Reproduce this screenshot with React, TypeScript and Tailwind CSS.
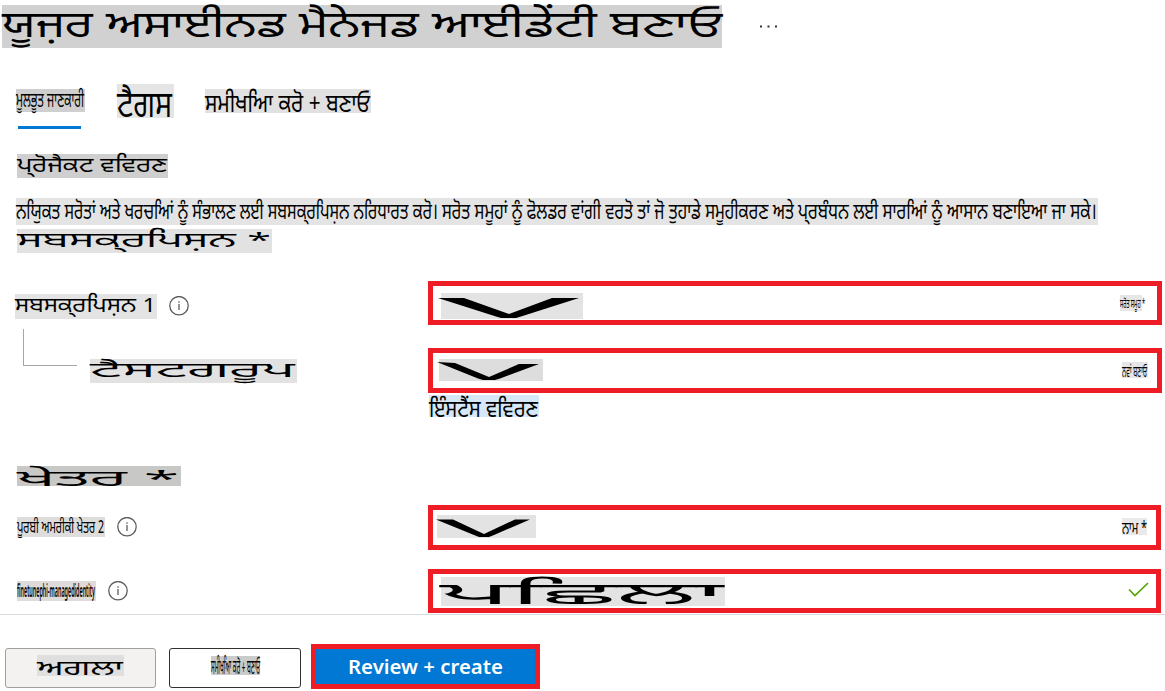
import { useLayoutEffect, useRef, useState } from 'react';
import type { ReactNode } from 'react';

type FitProps = {
  children: string;
  /** Size, background and font size of the box. */
  className: string;
  /** Drawn width of the text. */
  fit: number;
  /** Distance from the top of the box to the baseline. */
  base: number;
  x?: number;
};

/** A shaded box whose single line of text is stretched to a given width. */
function Fit({ children, className, fit, base, x = 0 }: FitProps) {
  const ref = useRef<HTMLSpanElement>(null);
  const [scale, setScale] = useState(1);
  useLayoutEffect(() => {
    if (ref.current) setScale(fit / ref.current.getBoundingClientRect().width * scale);
  }, [fit, children]);
  return (
    <div className={`shrink-0 ${className}`}>
      <span
        ref={ref}
        className="block h-0 w-max origin-left whitespace-pre leading-[0]"
        style={{ transform: `translate(${x}px, calc(${base}px - 0.388em)) scaleX(${scale})` }}
      >
        {children}
      </span>
    </div>
  );
}

function Info({ className }: { className: string }) {
  return (
    <svg className={`size-5 shrink-0 ${className}`} viewBox="0 0 20 20" fill="none">
      <circle cx="10" cy="9.700" r="9.200" stroke="#605e5c" strokeWidth="1.300" />
      <path d="M10 8V14M10 5.200V6.700" stroke="#605e5c" strokeWidth="1.300" />
    </svg>
  );
}

function Field({ className, children }: { className: string; children: ReactNode }) {
  return (
    <div className={`flex shrink-0 items-start border-[5px] border-[#ee1c24] bg-white ${className}`}>
      {children}
    </div>
  );
}

function Chevron({ className, box, points }: { className: string; box: string; points: string }) {
  return (
    <svg className={`shrink-0 overflow-visible ${className}`} viewBox={box}>
      <polygon points={points} fill="#000" />
    </svg>
  );
}

export default function App() {
  return (
    <main className="flex h-[691px] w-[1165px] flex-col overflow-hidden bg-white font-['Noto_Sans','Noto_Sans_Gurmukhi',sans-serif] text-black [font-feature-settings:'nukt'_0]">
      <header className="flex h-[84px] items-start pl-[2px] pt-[5px]">
        <h1 className="flex h-[43px] w-[720px] shrink-0 gap-[14px] bg-[#d1d1d1] text-[37px]">
          <Fit className="w-[90px]" fit={91} base={32.500}>ਯੂਜ਼ਰ</Fit>
          <Fit className="w-[179px]" fit={180} base={32.500}>ਅਸਾਈਨਡ</Fit>
          <Fit className="w-[119px]" fit={120} base={32.500}>ਮੈਨੇਜਡ</Fit>
          <Fit className="w-[164px]" fit={165} base={32.500}>ਆਈਡੇਂਟੀ</Fit>
          <Fit className="w-[112px]" fit={112} base={32.500}>ਬਣਾਓ</Fit>
        </h1>
        <svg className="ml-[37px] mt-[20px] h-[3px] w-[20px]" viewBox="0 0 20 3" fill="#333">
          <path d="M1 .5h2v2H1zM8.500 .5h2v2h-2zM16 .5h2v2h-2z" />
        </svg>
      </header>

      <nav className="flex h-[70px] items-start pl-[16px]">
        <div className="mt-[5px] flex w-[69px] flex-col">
          <Fit className="h-[23px] w-[69px] bg-[#cfcfcf] text-[20px]" fit={68} base={18.500}>
            ਮੂਲਭੂਤ ਜਾਣਕਾਰੀ
          </Fit>
          <div className="ml-[2px] mt-[14px] h-[3px] w-[63px] bg-[#0078d4]" />
        </div>
        <Fit className="ml-[32px] h-[34px] w-[57px] bg-[#e5e5e5] text-[36px]" fit={55} base={34}>
          ਟੈਗਸ
        </Fit>
        <Fit className="ml-[31px] mt-[5px] h-[24px] w-[166px] bg-[#e1e1e1] text-[25px]" fit={165} base={23}>
          ਸਮੀਖਆਿ ਕਰੋ + ਬਣਾਓ
        </Fit>
      </nav>

      <section className="flex h-[127px] flex-col">
        <Fit className="ml-[17px] h-[24px] w-[151px] bg-[#cfcfcf] text-[20px]" fit={150} base={19}>
          {'ਪ੍\u200cਰੋਜੈਕਟ ਵਵਿਰਣ'}
        </Fit>
        <div className="ml-[16px] mt-[20px] flex h-[27px] w-[1082px] shrink-0 bg-[#e4e4e4] text-[23px]">
          <Fit className="w-[426px]" fit={422} base={20.500}>
            {'ਨਯਿੁਕਤ ਸਰੋਤਾਂ ਅਤੇ ਖਰਚਆਿਂ ਨੂੰ ਸੰਭਾਲਣ ਲਈ ਸਬਸਕ੍\u200cਰਪਿਸ਼ਨ ਨਰਿਧਾਰਤ ਕਰੋ।'}
          </Fit>
          <Fit className="w-[356px]" fit={352} base={20.500}>
            ਸਰੋਤ ਸਮੂਹਾਂ ਨੂੰ ਫੋਲਡਰ ਵਾਂਗੀ ਵਰਤੋ ਤਾਂ ਜੋ ਤੁਹਾਡੇ ਸਮੂਹੀਕਰਣ ਅਤੇ
          </Fit>
          <Fit className="w-[300px]" fit={299} base={20.500}>
            {'ਪ੍\u200cਰਬੰਧਨ ਲਈ ਸਾਰਆਿਂ ਨੂੰ ਆਸਾਨ ਬਣਾਇਆ ਜਾ ਸਕੇ।'}
          </Fit>
        </div>
        <Fit className="ml-[17px] mt-[4px] h-[24px] w-[255px] bg-[#e2e2e2] text-[20px]" fit={254} base={19}>
          {'ਸਬਸਕ੍\u200cਰਪਿਸ਼ਨ *'}
        </Fit>
      </section>

      <section className="flex h-[333px] shrink-0 flex-col">
        <div className="grid h-[48px] grid-cols-[428px_737px] items-start">
          <div className="flex items-start pl-[15px] pt-[13px]">
            <Fit className="h-[25px] w-[142px] bg-[#e3e3e3] text-[20px]" fit={141} base={19}>
              {'ਸਬਸਕ੍\u200cਰਪਿਸ਼ਨ 1'}
            </Fit>
            <Info className="ml-[12px] mt-[2px]" />
          </div>
          <Field className="h-[44px] w-[734px]">
            <div className="ml-[8px] mt-[7px] h-[26px] w-[142px] bg-[#e3e3e3]">
              <Chevron
                className="h-[26px] w-[142px]"
                box="441 293 142 26"
                points="438,298 464,298 509,314 552,298 579,298 521,316.500 516,318 501,318 496,316.500"
              />
            </div>
            <Fit className="ml-[537px] mt-[9px] h-[16px] w-[22px] bg-[#e6e6e6] text-[13px]" fit={25} base={13}>
              ਸਰੋਤ ਸਮੂਹ *
            </Fit>
          </Field>
        </div>

        <div className="grid h-[66px] grid-cols-[428px_737px] items-start">
          <div className="flex items-start pl-[23px]">
            <div className="h-[37px] w-[54px] border-b border-l border-[#a6a6a6]" />
            <Fit className="ml-[13px] mt-[30px] h-[24px] w-[207px] bg-[#e2e2e2] text-[20px]" fit={205} base={19}>
              ਟੈਸਟਗਰੂਪ
            </Fit>
          </div>
          <Field className="mt-[19px] h-[45px] w-[734px]">
            <div className="ml-[6px] mt-[6px] h-[22px] w-[104px] bg-[#dddddd]">
              <Chevron
                className="h-[22px] w-[104px]"
                box="439 359 104 22"
                points="437,362 455,363 489,377 519,364 539,364 500,378.500 495,380 483,380 478,378.500"
              />
            </div>
            <Fit className="ml-[579px] mt-[9px] h-[16px] w-[26px] bg-[#e6e6e6] text-[16px]" fit={25} base={15.500}>
              ਨਵਾਂ ਬਣਾਓ
            </Fit>
          </Field>
        </div>

        <Fit className="ml-[429px] h-[22px] w-[110px] bg-[#d6e8f7] text-[24px]" fit={109} base={22}>
          ਇੰਸਟੈਂਸ ਵਵਿਰਣ
        </Fit>
        <Fit className="ml-[17px] mt-[49px] h-[20px] w-[164px] bg-[#c8c8c6] text-[22px]" fit={162} base={20}>
          ਖੇਤਰ *
        </Fit>

        <div className="mt-[19px] grid h-[64px] shrink-0 grid-cols-[428px_737px] items-start">
          <div className="flex items-start pl-[17px] pt-[12px]">
            <Fit className="h-[20px] w-[88px] bg-[#dfdddc] text-[18px]" fit={87} base={15.500}>
              ਪੂਰਬੀ ਅਮਰੀਕੀ ਖੇਤਰ 2
            </Fit>
            <Info className="ml-[12px]" />
          </div>
          <Field className="h-[45px] w-[733px]">
            <div className="ml-[4px] mt-[5px] h-[23px] w-[99px] bg-[#e3e3e3]">
              <Chevron
                className="h-[23px] w-[99px]"
                box="437 515 99 23"
                points="436,519.500 453,519.500 484,534 515,519.500 530,519.500 494,535 489,537 479,537 474,535"
              />
            </div>
            <Fit className="ml-[586px] mt-[8px] h-[17px] w-[25px] bg-[#e9e9e9] text-[18px]" fit={25} base={16}>
              ਨਾਮ *
            </Fit>
          </Field>
        </div>

        <div className="grid h-[45px] shrink-0 grid-cols-[428px_737px] items-start">
          <div className="flex items-start pl-[17px] pt-[12px]">
            <Fit className="h-[20px] w-[79px] bg-[#dfdbdb] text-[18px] font-semibold" fit={78} base={16}>
              finetunephi-managedidentity
            </Fit>
            <Info className="ml-[12px]" />
          </div>
          <Field className="h-[44px] w-[733px]">
            <Fit className="ml-[8px] mt-[3px] h-[29px] w-[284px] bg-[#e3e3e3] text-[30px]" fit={284} base={28} x={-1}>
              ਪਛਿਲਾ
            </Fit>
            <svg className="ml-[403px] mt-[8px] h-[15px] w-[21px]" viewBox="0 0 21 15" fill="none">
              <path d="M1 7.500L7 13.500L20 1" stroke="#57a300" strokeWidth="1.700" />
            </svg>
          </Field>
        </div>
      </section>

      <footer className="flex h-[77px] shrink-0 items-start border-t border-[#dcdcdc] pl-[5px]">
        <button className="mt-[33px] flex h-[40px] w-[151px] items-start rounded-[3px] border border-[#a19f9d] bg-[#f3f2f1] pl-[31px] pt-[6px] text-left">
          <Fit className="h-[21px] w-[87px] bg-[#dfdfdf] text-[21px]" fit={86} base={20.500}>
            ਅਗਲਾ
          </Fit>
        </button>
        <button className="ml-[13px] mt-[33px] flex h-[40px] w-[132px] items-start rounded-[3px] border border-[#323130] bg-white pl-[41px] pt-[7px] text-left">
          <Fit className="h-[19px] w-[49px] bg-[#cbcbcb] text-[20px]" fit={49} base={18.500}>
            ਸਮੀਖਆਿ ਕਰੋ + ਬਣਾਓ
          </Fit>
        </button>
        <button className="ml-[10px] mt-[29px] flex h-[45px] w-[229px] items-start border-[5px] border-[#ee1c24] bg-[#0078d4] pl-[32px] text-left font-semibold text-white">
          <Fit className="h-[35px] w-[155px] text-[20px]" fit={155} base={25.500}>
            Review + create
          </Fit>
        </button>
      </footer>
    </main>
  );
}
